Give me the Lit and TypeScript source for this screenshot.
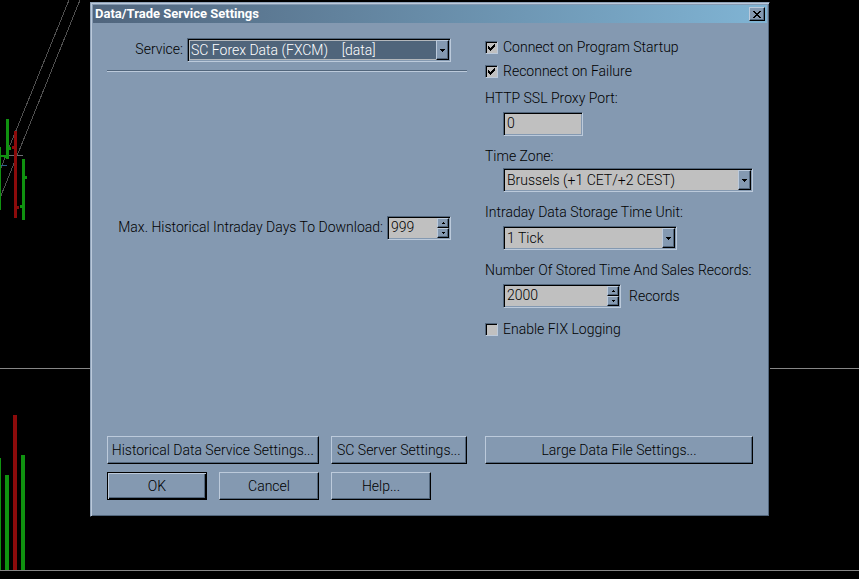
import { LitElement, html, svg, css } from "lit";
import { customElement, property, state } from "lit/decorators.js";
import { classMap } from "lit/directives/class-map.js";

const controls = css`
  * {
    box-sizing: border-box;
  }
  .sunken {
    display: flex;
    height: 24px;
    padding: 1px;
    border: 1px solid;
    border-color: #52667c #bccadb #bccadb #52667c;
    box-shadow: inset 1px 1px 0 #000, inset -1px -1px 0 #8499b1;
    background: #c0c0c0;
  }
  input,
  select {
    flex: 1;
    min-width: 0;
    width: 100%;
    height: 100%;
    margin: 0;
    padding: 0 2px;
    border: 0;
    border-radius: 0;
    outline: 0;
    background: transparent;
    color: #000;
    font: 300 14px/18px Roboto, "Liberation Sans", sans-serif;
    appearance: none;
    -moz-appearance: textfield;
  }
  input {
    padding-bottom: 2px;
  }
  input::-webkit-inner-spin-button {
    appearance: none;
    margin: 0;
  }
  .raised {
    display: grid;
    place-items: center;
    padding: 0;
    border: 1px solid;
    border-color: #bccadb #000 #000 #bccadb;
    box-shadow: inset -1px -1px 0 #52667c;
    background: #8499b1;
  }
`;

/** Sunken drop-down list with a raised arrow. */
@customElement("combo-box")
export class ComboBox extends LitElement {
  @property() label = "";
  @property() value = "";
  @property({ type: Boolean }) active = false;

  static styles = [
    controls,
    css`
      :host {
        display: block;
      }
      .combo {
        display: grid;
        grid-template-columns: minmax(0, 1fr) 13px;
      }
      select {
        grid-area: 1 / 1 / 2 / 3;
      }
      .raised {
        grid-area: 1 / 2;
        pointer-events: none;
      }
      .active select {
        padding: 0 1px;
        border: 1px solid #b4b8bc;
        background: #50657b;
        color: #fff;
      }
    `,
  ];

  render() {
    return html`<div class=${classMap({ sunken: true, combo: true, active: this.active })}>
      <select aria-label=${this.label}>
        <option>${this.value}</option>
      </select>
      <span class="raised">
        <svg width="5" height="3" viewBox="0 0 5 3" shape-rendering="crispEdges">
          <path d="M0 0h5v1h-1v1h-1v1h-1v-1h-1v-1h-1z" />
        </svg>
      </span>
    </div>`;
  }
}

/** Number field with stacked up and down buttons. */
@customElement("spin-box")
export class SpinBox extends LitElement {
  @property() label = "";
  @property({ type: Number }) value = 0;

  static styles = [
    controls,
    css`
      :host {
        display: block;
      }
      .steps {
        display: grid;
        grid-template-rows: 1fr 1fr;
        width: 12px;
      }
    `,
  ];

  render() {
    return html`<div class="sunken">
      <input
        type="number"
        aria-label=${this.label}
        .value=${String(this.value)}
        @change=${(e: Event) => (this.value = Number((e.target as HTMLInputElement).value))}
      />
      <span class="steps">
        <button class="raised" aria-label="Increase" @click=${() => this.value++}>
          <svg width="3" height="2" viewBox="0 0 3 2" shape-rendering="crispEdges">
            <path d="M1 0h1v1h1v1h-3v-1h1z" />
          </svg>
        </button>
        <button class="raised" aria-label="Decrease" @click=${() => this.value--}>
          <svg width="3" height="2" viewBox="0 0 3 2" shape-rendering="crispEdges">
            <path d="M0 0h3v1h-1v1h-1v-1h-1z" />
          </svg>
        </button>
      </span>
    </div>`;
  }
}

const GREEN = "#109210";
const RED = "#8c0b0b";

// Each bar: x, top, height, width, colour
const bars: [number, number, number, number, string][] = [
  [0, 147, 63, 1, GREEN],
  [1, 155, 2, 3, GREEN],
  [6, 119, 40, 3, GREEN],
  [9, 147, 3, 2, GREEN],
  [4, 155, 3, 2, GREEN],
  [14, 131, 87, 3, RED],
  [12, 146, 3, 2, RED],
  [17, 206, 3, 2, RED],
  [22, 159, 61, 3, GREEN],
  [25, 176, 3, 2, GREEN],
  [20, 205, 3, 2, GREEN],
  [0, 458, 112, 1, GREEN],
  [5, 475, 95, 4, GREEN],
  [13, 415, 155, 4, RED],
  [21, 455, 115, 4, GREEN],
];

@customElement("app-root")
export class AppRoot extends LitElement {
  @state() private startup = true;
  @state() private reconnect = true;
  @state() private fix = false;

  static styles = [
    controls,
    css`
      :host {
        display: block;
        position: relative;
        min-height: 100vh;
        padding: 2px 89px 0 90px;
        overflow: hidden;
        background: #000;
        color: #000;
        font: 300 14px/16px Roboto, "Liberation Sans", sans-serif;
        box-sizing: border-box;
      }
      .chart {
        position: absolute;
        inset: 0;
        width: 100%;
        height: 100%;
      }
      .dialog {
        position: relative;
        padding: 2px;
        border: 1px solid;
        border-color: #8fa2b8 #000 #000 #8fa2b8;
        box-shadow: inset 1px 1px 0 #bccadb, inset -1px -1px 0 #52667c;
        background: #8499b1;
      }
      .title {
        display: flex;
        align-items: center;
        justify-content: space-between;
        height: 18px;
        padding: 0 2px;
        background: linear-gradient(90deg, #50657d, #80b4d4);
      }
      h1 {
        margin: 0;
        color: #fff;
        font-size: 13px;
        font-weight: 700;
        line-height: 18px;
      }
      .close {
        width: 16px;
        height: 14px;
      }
      .body {
        display: grid;
        grid-template-columns: minmax(0, 360fr) minmax(0, 268fr);
        column-gap: 18px;
        padding: 15px 14px 14px;
      }
      .row {
        display: flex;
        align-items: center;
      }
      .end {
        justify-content: flex-end;
        gap: 4px;
        padding-right: 16px;
      }
      .end > span {
        padding-bottom: 3px;
        white-space: nowrap;
      }
      .service {
        width: 264px;
      }
      hr {
        height: 2px;
        margin: 8px 0 144px;
        border: 0;
        border-top: 1px solid #52667c;
        border-bottom: 1px solid #bccadb;
      }
      .days {
        width: 64px;
      }
      .options {
        display: flex;
        flex-direction: column;
        gap: 12px;
        padding-top: 3px;
      }
      .checks {
        display: grid;
        gap: 11px;
      }
      .check {
        display: flex;
        align-items: center;
        gap: 5px;
        line-height: 13px;
      }
      .options > .check {
        margin-top: 3px;
      }
      .tick {
        flex: none;
        width: 13px;
        height: 13px;
        padding: 0;
        border: 1px solid;
        border-color: #52667c #bccadb #bccadb #52667c;
        box-shadow: inset 1px 1px 0 #000;
        background: #c0c0c0;
      }
      .mark {
        display: grid;
      }
      .mark > * {
        grid-area: 1 / 1;
      }
      .mark svg {
        place-self: center;
        pointer-events: none;
      }
      .group {
        display: grid;
        gap: 6px;
        white-space: nowrap;
      }
      .tight {
        gap: 4px;
      }
      .field {
        margin-left: 18px;
      }
      .port {
        width: 80px;
      }
      .unit {
        width: 174px;
      }
      .records {
        gap: 8px;
      }
      .count {
        width: 118px;
      }
      .actions {
        grid-column: 1 / 3;
        display: grid;
        grid-template-columns: subgrid;
        gap: 8px 18px;
        margin-top: 100px;
      }
      .set {
        display: flex;
        gap: 12px;
      }
      .push {
        height: 28px;
        color: inherit;
        font: inherit;
        white-space: nowrap;
      }
      .history {
        flex: 212;
      }
      .server {
        flex: 136;
      }
      .fixed {
        width: 100px;
      }
      .default {
        border-color: #000;
        box-shadow: inset 1px 1px 0 #bccadb, inset -1px -1px 0 #000, inset -2px -2px 0 #52667c;
      }
    `,
  ];

  private check(text: string, on: boolean, set: (v: boolean) => void) {
    return html`<label class="check">
      <span class="mark">
        <input
          class="tick"
          type="checkbox"
          .checked=${on}
          @change=${(e: Event) => set((e.target as HTMLInputElement).checked)}
        />
        ${on
          ? html`<svg width="7" height="7" viewBox="0 0 7 7" shape-rendering="crispEdges">
              <path d="M0 2h1v1h1v1h1v-1h1v-1h1v-1h1v-1h1v3h-1v1h-1v1h-1v1h-1v1h-1v-1h-1v-1h-1z" />
            </svg>`
          : ""}
      </span>
      ${text}
    </label>`;
  }

  render() {
    return html`
      <svg class="chart" shape-rendering="crispEdges" aria-hidden="true">
        <g stroke="#505050">
          <line x1="69" y1="0" x2="0" y2="170" />
          <line x1="80" y1="0" x2="0" y2="198" />
        </g>
        <rect x="9" y="155" width="14" height="1" fill="#6e6e74" />
        <rect x="1" y="165" width="6" height="1" fill="#2f5f8a" />
        <rect y="368" width="100%" height="1" fill="#868686" />
        <rect y="570" width="100%" height="1" fill="#868686" />
        ${bars.map(
          ([x, y, h, w, c]) => svg`<rect x=${x} y=${y} width=${w} height=${h} fill=${c} />`,
        )}
      </svg>
      <section class="dialog" role="dialog" aria-labelledby="title">
        <header class="title">
          <h1 id="title">Data/Trade Service Settings</h1>
          <button class="raised close" aria-label="Close">
            <svg width="8" height="7" viewBox="0 0 8 7" shape-rendering="crispEdges">
              <path
                d="M0 0h2v1h1v1h2v-1h1v-1h2v1h-1v1h-1v1h-1v1h1v1h1v1h1v1h-2v-1h-1v-1h-2v1h-1v1h-2v-1h1v-1h1v-1h1v-1h-1v-1h-1v-1h-1z"
              />
            </svg>
          </button>
        </header>
        <div class="body">
          <div>
            <div class="row end">
              <span>Service:</span>
              <combo-box
                class="service"
                label="Service"
                active
                value=${"SC Forex Data (FXCM)\u00a0\u00a0\u00a0 [data]"}
              ></combo-box>
            </div>
            <hr />
            <div class="row end">
              <span>Max. Historical Intraday Days To Download:</span>
              <spin-box
                class="days"
                label="Max. Historical Intraday Days To Download"
                .value=${999}
              ></spin-box>
            </div>
          </div>
          <div class="options">
            <div class="checks">
              ${this.check("Connect on Program Startup", this.startup, (v) => (this.startup = v))}
              ${this.check("Reconnect on Failure", this.reconnect, (v) => (this.reconnect = v))}
            </div>
            <div class="group">
              <label for="port">HTTP SSL Proxy Port:</label>
              <div class="field port sunken"><input id="port" type="text" value="0" /></div>
            </div>
            <div class="group tight">
              <span>Time Zone:</span>
              <combo-box
                class="field"
                label="Time Zone"
                value="Brussels (+1 CET/+2 CEST)"
              ></combo-box>
            </div>
            <div class="group">
              <span>Intraday Data Storage Time Unit:</span>
              <combo-box
                class="field unit"
                label="Intraday Data Storage Time Unit"
                value="1 Tick"
              ></combo-box>
            </div>
            <div class="group">
              <span>Number Of Stored Time And Sales Records:</span>
              <div class="row field records">
                <spin-box
                  class="count"
                  label="Number Of Stored Time And Sales Records"
                  .value=${2000}
                ></spin-box>
                <span>Records</span>
              </div>
            </div>
            ${this.check("Enable FIX Logging", this.fix, (v) => (this.fix = v))}
          </div>
          <div class="actions">
            <div class="set">
              <button class="raised push history">Historical Data Service Settings...</button>
              <button class="raised push server">SC Server Settings...</button>
            </div>
            <button class="raised push">Large Data File Settings...</button>
            <div class="set">
              <button class="raised push fixed default">OK</button>
              <button class="raised push fixed">Cancel</button>
              <button class="raised push fixed">Help...</button>
            </div>
          </div>
        </div>
      </section>
    `;
  }
}
